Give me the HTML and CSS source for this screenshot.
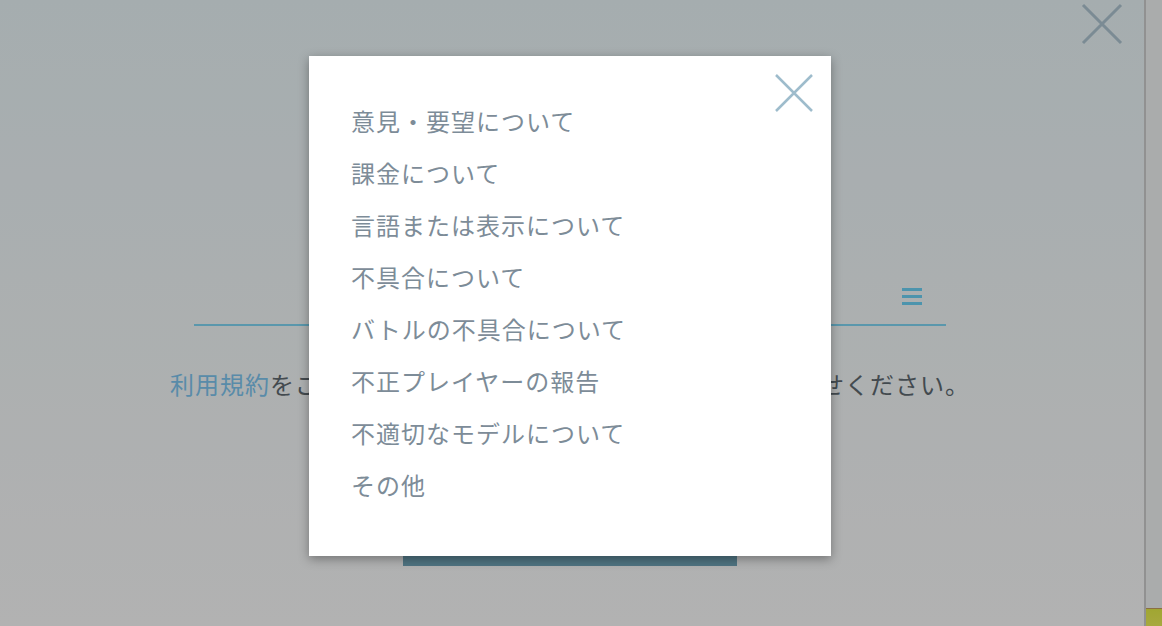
FILE: index.html
```html
<!DOCTYPE html>
<html lang="ja">

<head>
  <meta charset="UTF-8" />
  <meta name="viewport" content="width=device-width, initial-scale=1.0" />
  <title>お問い合わせ</title>
  <link rel="stylesheet" href="styles.css">
</head>

<body>
  <div class="page">
    <main class="content">
      <div class="select-row">
        <span class="menu-icon">
          <span></span><span></span><span></span>
        </span>
      </div>
      <p class="notice"><a href="#">利用規約</a>をご確認の上、同意いただける場合はお問い合わせください。</p>
      <button class="send-btn">送信</button>
    </main>
    <aside class="side">
      <div class="side-thumb"></div>
    </aside>

    <!-- 暗幕 -->
    <div class="overlay"></div>

    <button class="page-close" aria-label="閉じる">
      <svg width="44" height="44" viewBox="0 0 44 44">
        <path d="M3 3 L41 41 M41 3 L3 41" stroke="#7b8b94" stroke-width="3" fill="none" />
      </svg>
    </button>

    <div class="modal">
      <button class="modal-close" aria-label="閉じる">
        <svg width="38" height="38" viewBox="0 0 38 38">
          <path d="M1 1 L37 37 M37 1 L1 37" stroke="#9ebccc" stroke-width="2.5" fill="none" />
        </svg>
      </button>
      <ul class="category-list">
        <li>意見・要望について</li>
        <li>課金について</li>
        <li>言語または表示について</li>
        <li>不具合について</li>
        <li>バトルの不具合について</li>
        <li>不正プレイヤーの報告</li>
        <li>不適切なモデルについて</li>
        <li>その他</li>
      </ul>
    </div>
  </div>
</body>

</html>
```

FILE: styles.css
```css
* {
  box-sizing: border-box;
}

body {
  margin: 0;
  font-family: "Noto Sans CJK JP", "Noto Sans", sans-serif;
  overflow: hidden;
}

.page {
  position: relative;
  display: flex;
  width: 1162px;
  height: 626px;
  background: linear-gradient(#edf8fb, #ffffff);
}

.content {
  width: 1144px;
  display: flex;
  flex-direction: column;
  align-items: center;
  padding: 280px 4px 0 0;
}

.select-row {
  width: 752px;
  height: 46px;
  border-bottom: 2px solid #82d8f6;
  display: flex;
  justify-content: flex-end;
  padding: 8px 24px 0 0;
}

.menu-icon {
  display: flex;
  flex-direction: column;
  gap: 4px;
  width: 20px;
}

.menu-icon span {
  display: block;
  height: 3px;
  background-color: #6ed4f8;
}

.notice {
  margin: 40px 0 0;
  font-size: 24px;
  line-height: 36px;
  color: #606b72;
  letter-spacing: 1px;
}

.notice a {
  color: #80c8f2;
  text-decoration: none;
}

.send-btn {
  margin-top: 108px;
  width: 334px;
  height: 56px;
  border: none;
  background-color: #71a7ba;
  color: #fff;
  font-size: 22px;
}

.side {
  flex: 1;
  border-left: 2px solid #d0d0d0;
  background-color: #f4f6f6;
  display: flex;
  flex-direction: column;
  justify-content: flex-end;
}

.side-thumb {
  height: 18px;
  background: linear-gradient(#e6ee48, #f0f25c);
  border-top: 1px solid #c8a060;
}

.overlay {
  position: absolute;
  inset: 0;
  background-color: rgba(0, 0, 0, 0.3);
}

.page-close {
  position: absolute;
  top: 2px;
  left: 1080px;
  padding: 0;
  border: none;
  background: none;
}

.modal {
  position: absolute;
  top: 56px;
  left: 309px;
  width: 522px;
  height: 500px;
  background-color: #fff;
  box-shadow: 0 3px 10px rgba(0, 0, 0, 0.35);
  padding: 39px 0 0 42px;
}

.modal-close {
  position: absolute;
  top: 18px;
  right: 18px;
  padding: 0;
  border: none;
  background: none;
}

.category-list {
  list-style: none;
  margin: 0;
  padding: 0;
}

.category-list li {
  font-size: 24px;
  line-height: 52px;
  color: #7d8c98;
  letter-spacing: 1px;
}
```
